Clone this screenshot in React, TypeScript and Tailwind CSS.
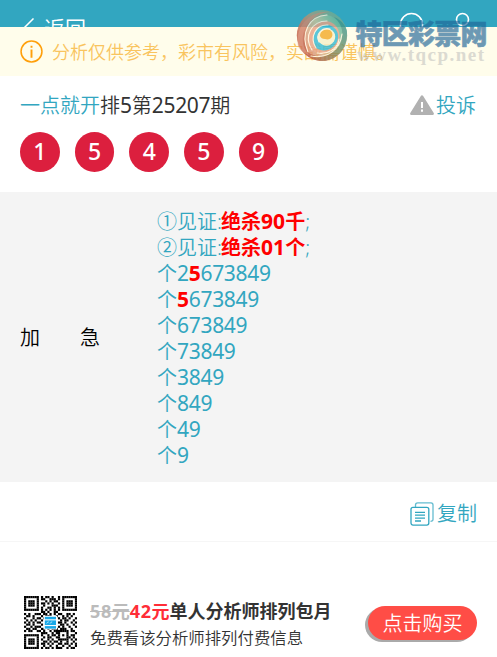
import React from "react";

const balls = ["1", "5", "4", "5", "9"];

const tails = ["673849", "73849", "3849", "849", "49", "9"];

const qrRows = [
    "1111111010110100101111111",
    "1000001011001110101000001",
    "1011101000101011001011101",
    "1011101011010100101011101",
    "1011101001000111001011101",
    "1000001010011010101000001",
    "1111111010101010101111111",
    "0000000011010011000000000",
    "1010011101101010110011010",
    "0110100010111001001010100",
    "1000101101000000101101001",
    "0101010010000000010110010",
    "1010101100000000110100101",
    "0110100010000000011010010",
    "1001011100000000101001001",
    "0110110011010111011100100",
    "1011001101001011111110110",
    "0000000011100101100010001",
    "1111111010010110101010110",
    "1000001001011001100011010",
    "1011101010010100111110101",
    "1011101001101011010010010",
    "1011101011010100110110101",
    "1000001001001001001001001",
    "1111111010110101110010110",
];

const Num: React.FC<{ children: React.ReactNode }> = ({ children }) => (
    <span className="text-[21px] font-normal tracking-[-0.3px]">{children}</span>
);

const BoldNum: React.FC<{ children: React.ReactNode }> = ({ children }) => (
    <span className="text-[21px] tracking-[0.1px]">{children}</span>
);

const QrCode: React.FC = () => (
    <svg viewBox="0 0 25 25" className="h-[53px] w-[53px] shrink-0" fill="#000">
        {qrRows.map((row, y) =>
            row
                .split("")
                .map((cell, x) =>
                    cell === "1" ? <rect key={`${x}-${y}`} x={x} y={y} width="1.03" height="1.03" /> : null
                )
        )}
        <rect x="9.2" y="9.3" width="6.5" height="6.5" fill="#fff" />
        <rect x="9.8" y="9.8" width="5.3" height="1.2" fill="#18a8e8" />
        <rect x="9.8" y="11.5" width="5.3" height="2.2" fill="#18a8e8" />
        <rect x="9.8" y="14.2" width="5.3" height="1.2" fill="#18a8e8" />
        <path d="M10.7 13q.3-.8 1-.8m.6.8q.3-.8 1-.8" stroke="#fff" strokeWidth=".3" fill="none" />
    </svg>
);

const Watermark: React.FC = () => (
    <div className="absolute left-[295px] top-[8px] h-[58px] w-[202px]">
        <svg viewBox="0 0 202 58" className="h-full w-full">
            <defs>
                <linearGradient id="shell" x1="0.8" y1="0" x2="0.1" y2="0.8">
                    <stop offset="0" stopColor="#5fae98" />
                    <stop offset="0.35" stopColor="#9aa184" />
                    <stop offset="0.6" stopColor="#cf7c60" />
                    <stop offset="1" stopColor="#b94f38" />
                </linearGradient>
                <linearGradient id="petal" x1="1" y1="0.2" x2="0" y2="0.8">
                    <stop offset="0" stopColor="#58b89c" />
                    <stop offset="0.5" stopColor="#c8c49c" />
                    <stop offset="1" stopColor="#e08d70" />
                </linearGradient>
                <linearGradient id="tail" x1="1" y1="0" x2="0" y2="1">
                    <stop offset="0" stopColor="#2f9c9c" />
                    <stop offset="0.5" stopColor="#7c8f62" />
                    <stop offset="1" stopColor="#c05a3c" />
                </linearGradient>
            </defs>
            <g opacity="0.82">
                <ellipse cx="27" cy="27.5" rx="25.2" ry="25.5" fill="url(#shell)" />
                <path d="M52 25C52 42 41 53 26 53C20 52 16 50 14 47C31 50 45 42 46 22C45 16 42 12 39 9C47 12 52 19 52 25Z" fill="url(#tail)" />
                <path d="M13 44C5 25 14 8 32 7C43 9 49 19 47 30C45 42 33 50 22 48C18 47 15 46 13 44Z" fill="url(#petal)" />
                <path d="M17 42C8 28 17 13 32 13C43 15 47 26 43 35C39 43 29 48 22 45Z" fill="#e8a285" />
                <path d="M21 40C14 29 21 16 33 17C44 19 46 31 39 38C34 43 27 44 21 40Z" fill="#38bad4" />
                <path d="M24 34C20 26 27 19 35 21C42 24 42 33 35 37C31 39 27 37 24 34Z" fill="#f8f0ca" />
                <path d="M25 28C25 22 32 20 36 23C40 28 35 33 30 31C27 31 26 30 25 28Z" fill="#f4ac2c" />
                <path d="M3 38C0 17 16 2 35 4C19 5 6 18 8 35C9 41 12 44 14 47C8 45 5 42 3 38Z" fill="#d88970" opacity="0.65" />
                <path
                    d="M13 44C5 25 14 8 32 7M17 42C8 28 17 13 32 13M21 40C14 29 21 16 33 17M24 34C20 26 27 19 35 21M16 48C32 51 45 42 47 26M22 45C32 47 43 41 44 31"
                    fill="none"
                    stroke="#fff2db"
                    strokeWidth="1.1"
                    strokeLinecap="round"
                />
            </g>
            <text
                x="60.5"
                y="36"
                textLength="132"
                className="font-['Noto_Sans_CJK_SC',sans-serif] text-[27px] font-black"
                fill="#1f6597"
                stroke="#1f6597"
                strokeWidth="0.6"
                opacity="0.65"
            >
                特区彩票网
            </text>
            <text
                x="62"
                y="52.5"
                textLength="127"
                className="font-['Liberation_Serif',serif] text-[19px] font-bold"
                fill="#b8b8b8"
                opacity="0.5"
            >
                www.tqcp.net
            </text>
        </svg>
    </div>
);

const App: React.FC = () => {
    return (
        <div className="relative h-[657px] w-[497px] overflow-hidden bg-white font-['Noto_Sans','Noto_Sans_CJK_SC',sans-serif] text-[20px] font-[350] text-[#333]">
            {/* Header */}
            <div className="flex h-[27px] items-start overflow-hidden bg-[#32a6c0] pl-5 text-white">
                <svg viewBox="0 0 24 24" className="mt-[18px] h-6 w-6 shrink-0" fill="none" stroke="#fff" strokeWidth="1.5">
                    <path d="M13.5 0.5L3 11L13.5 21.5" />
                </svg>
                <span className="mt-[14px] text-[21px] leading-[28px]">返回</span>
                <svg viewBox="0 0 80 30" className="ml-auto mr-[20px] mt-[12px] h-[30px] w-[80px] shrink-0" fill="none" stroke="#fff" strokeWidth="1.6">
                    <circle cx="14.5" cy="12.5" r="11" />
                    <circle cx="65.5" cy="7.5" r="6" />
                </svg>
            </div>

            {/* Notice */}
            <div className="flex h-[49px] items-center bg-[#fffdeb] pl-5 text-[18px] text-[#f9c45e]">
                <svg viewBox="0 0 24 24" className="mr-[9px] h-[23px] w-[23px]" fill="none" stroke="#ff9f0a" strokeWidth="1.6">
                    <circle cx="12" cy="12" r="10.9" />
                    <path d="M12 10v8.5M12 6v2.2" strokeWidth="2" />
                </svg>
                <span className="whitespace-nowrap pt-px">分析仅供参考，彩市有风险，实战需谨慎。</span>
            </div>

            {/* Title and numbers */}
            <div className="h-[116px] px-5 pt-[14px]">
                <div className="flex h-[30px] items-center justify-between leading-[30px]">
                    <div className="pt-px">
                        <span className="text-[#32a6c0]">一点就开</span>排<Num>5</Num>第<Num>25207</Num>期
                    </div>
                    <div className="flex items-center gap-[2px] text-[#32a6c0]">
                        <svg viewBox="0 0 24 20" className="h-[20px] w-[24px]">
                            <path d="M12 1.5L22.7 18.7H1.3Z" fill="#b1b1b1" stroke="#b1b1b1" strokeWidth="2.4" strokeLinejoin="round" />
                            <path d="M12 7v6M12 14.6v2.2" stroke="#fff" strokeWidth="2" />
                        </svg>
                        <span className="mr-px pt-px">投诉</span>
                    </div>
                </div>
                <div className="mt-3 flex gap-[15px]">
                    {balls.map((ball, i) => (
                        <div
                            key={i}
                            className="flex h-10 w-[39.7px] items-center justify-center rounded-full bg-[#dc1f3e] pb-px text-[23px] font-medium leading-none text-white"
                        >
                            {ball}
                        </div>
                    ))}
                </div>
            </div>

            {/* Analysis */}
            <div className="flex h-[290px] items-center bg-[#f4f4f4] pl-5 pt-[2px]">
                <div className="flex w-[137px] gap-10 text-black">
                    <span>加</span>
                    <span>急</span>
                </div>
                <div className="leading-[26px] text-[#32a6c0]">
                    <div className="h-[26px]">
                        ①见证:<b className="-ml-px text-[#f00]">绝杀<BoldNum>90</BoldNum>千</b>;
                    </div>
                    <div className="h-[26px]">
                        ②见证:<b className="-ml-px text-[#f00]">绝杀<BoldNum>01</BoldNum>个</b>;
                    </div>
                    <div className="h-[26px]">
                        个<Num>2<b className="text-[#f00]">5</b>673849</Num>
                    </div>
                    <div className="h-[26px]">
                        个<Num><b className="text-[#f00]">5</b>673849</Num>
                    </div>
                    {tails.map((tail) => (
                        <div key={tail} className="h-[26px]">
                            个<Num>{tail}</Num>
                        </div>
                    ))}
                </div>
            </div>

            {/* Copy */}
            <div className="flex h-[60px] items-center justify-end gap-[3px] border-b border-[#f6f6f6] pr-5 pt-[5px] text-[#32a6c0]">
                <svg viewBox="0 0 24 24" className="h-6 w-6" fill="none" stroke="#32a6c0" strokeWidth="1.3">
                    <path d="M5.5 5V3Q5.5 .8 7.7 .8H21Q23 .8 23 3V17.5Q23 19.3 20.5 19.3" opacity="0.75" />
                    <rect x="1" y="5.3" width="17.8" height="17.8" rx="2" />
                    <path d="M5 10.3h10M5 13.2h10M5 16.1h10M5 19h6" />
                </svg>
                <span>复制</span>
            </div>

            {/* Monthly offer */}
            <div className="flex pl-6 pt-[54px]">
                <QrCode />
                <div className="ml-[13px] whitespace-nowrap">
                    <div className="h-[30px] text-[18px] font-bold leading-[30px]">
                        <span className="text-[#bbb] line-through decoration-1"><span className="tracking-[0.6px]">58</span>元</span>
                        <span className="text-[#ff2d37]"><span className="tracking-[0.6px]">42</span>元</span>
                        单人分析师排列包月
                    </div>
                    <div className="text-[16.4px] leading-6">免费看该分析师排列付费信息</div>
                </div>
                <button className="ml-auto mr-5 mt-[10px] h-[34px] w-[109px] rounded-full bg-[#ff4d46] text-[20px] leading-[36px] text-white shadow-[-3px_2px_0_#aaa]">
                    点击购买
                </button>
            </div>

            <Watermark />
        </div>
    );
};

export default App;
